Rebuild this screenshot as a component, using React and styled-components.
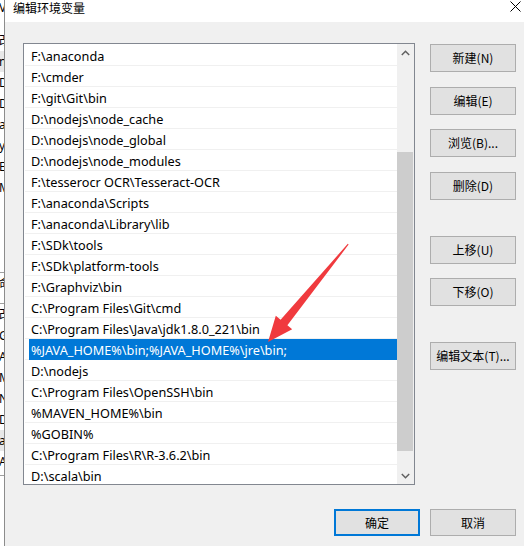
import styled, { createGlobalStyle } from 'styled-components';

const GlobalStyle = createGlobalStyle`
  html, body {
    margin: 0;
    padding: 0;
  }
  body {
    background: #f0f0f0;
    font-family: "Noto Sans", "Noto Sans CJK SC", sans-serif;
    overflow: hidden;
  }
`;

const paths = [
  'F:\\anaconda',
  'F:\\cmder',
  'F:\\git\\Git\\bin',
  'D:\\nodejs\\node_cache',
  'D:\\nodejs\\node_global',
  'D:\\nodejs\\node_modules',
  'F:\\tesserocr OCR\\Tesseract-OCR',
  'F:\\anaconda\\Scripts',
  'F:\\anaconda\\Library\\lib',
  'F:\\SDk\\tools',
  'F:\\SDk\\platform-tools',
  'F:\\Graphviz\\bin',
  'C:\\Program Files\\Git\\cmd',
  'C:\\Program Files\\Java\\jdk1.8.0_221\\bin',
  '%JAVA_HOME%\\bin;%JAVA_HOME%\\jre\\bin;',
  'D:\\nodejs',
  'C:\\Program Files\\OpenSSH\\bin',
  '%MAVEN_HOME%\\bin',
  '%GOBIN%',
  'C:\\Program Files\\R\\R-3.6.2\\bin',
  'D:\\scala\\bin',
];
const SELECTED = 14;

// the window peeking out behind the dialog
const backLines = [
  { text: 'V', h: 16 },
  { text: '', h: 14 },
  { text: '改', h: 21 },
  { text: 'n', h: 21, shade: true },
  { text: 'D', h: 21 },
  { text: 'D', h: 21 },
  { text: 'a', h: 21 },
  { text: 'y', h: 21 },
  { text: 'E', h: 21 },
  { text: 'M', h: 21 },
  { text: '', h: 75, line: true },
  { text: '命', h: 21 },
  { text: '', h: 10, line: true },
  { text: '改', h: 21 },
  { text: 'G', h: 21 },
  { text: 'A', h: 21 },
  { text: 'M', h: 21 },
  { text: 'N', h: 21 },
  { text: 'D', h: 21 },
  { text: 'a', h: 21, shade: true },
  { text: 'A', h: 21 },
  { text: '', h: 4, line: true },
];

const sideButtons = [
  { label: '新建(N)', top: 0 },
  { label: '编辑(E)', top: 15 },
  { label: '浏览(B)...', top: 14 },
  { label: '删除(D)', top: 15 },
  { label: '上移(U)', top: 36 },
  { label: '下移(O)', top: 14 },
  { label: '编辑文本(T)...', top: 36 },
];

const App = () => {
  return (
    <>
      <GlobalStyle />
      <Screen>
        <BackWindow>
          {backLines.map((l, i) => (
            <BackLine key={i} h={l.h} line={l.line} shade={l.shade}>
              {l.text}
            </BackLine>
          ))}
        </BackWindow>
        <Dialog>
          <TitleBar>
            <Title>编辑环境变量</Title>
            <Close width="11" height="11" viewBox="0 0 11 11">
              <path d="M0.5 0.5 L10.5 10.5 M10.5 0.5 L0.5 10.5" stroke="#000" strokeWidth="1" />
            </Close>
          </TitleBar>
          <Body>
            <MainRow>
              <ListBox>
                <Rows>
                  {paths.map((p, i) => (
                    <Row key={p}>
                      <Cell selected={i === SELECTED}>{p}</Cell>
                    </Row>
                  ))}
                </Rows>
                <ScrollBar>
                  <ArrowBox>
                    <svg width="9" height="6" viewBox="0 0 9 6">
                      <path d="M0.8 5 L4.5 1.3 L8.2 5" fill="none" stroke="#606060" strokeWidth="1.5" />
                    </svg>
                  </ArrowBox>
                  <Track>
                    <Thumb offset={91} size={299} />
                  </Track>
                  <ArrowBox>
                    <svg width="9" height="6" viewBox="0 0 9 6">
                      <path d="M0.8 1 L4.5 4.7 L8.2 1" fill="none" stroke="#606060" strokeWidth="1.5" />
                    </svg>
                  </ArrowBox>
                </ScrollBar>
              </ListBox>
              <ButtonColumn>
                {sideButtons.map(b => (
                  <Button key={b.label} top={b.top}>
                    {b.label}
                  </Button>
                ))}
              </ButtonColumn>
            </MainRow>
            <Footer>
              <FooterButton primary>确定</FooterButton>
              <FooterButton>取消</FooterButton>
            </Footer>
          </Body>
        </Dialog>
        <Pointer width="524" height="546" viewBox="0 0 524 546">
          <polygon
            points="348.6,244.6 287.4,325.3 292.2,329.2 268,342 275.8,315.8 280.6,319.8 347.8,243.8"
            fill="#f03a3e"
          />
        </Pointer>
      </Screen>
    </>
  );
};

export default App;

const Screen = styled.div`
  display: flex;
  height: 546px;
  overflow: hidden;
  position: relative;
  width: 524px;
`;

const BackWindow = styled.div`
  background: #fff;
  border-right: 1px solid #8c8c8c;
  display: flex;
  flex-direction: column;
  flex-shrink: 0;
  overflow: hidden;
  width: 4px;
`;

const BackLine = styled.div`
  background: ${({ shade }) => (shade ? '#e8e8e8' : 'transparent')};
  border-bottom: ${({ line }) => (line ? '1px solid #a0a0a0' : 'none')};
  box-sizing: border-box;
  color: #000;
  flex-shrink: 0;
  font-family: "Noto Sans", "Noto Sans CJK SC", sans-serif;
  font-size: 12px;
  height: ${({ h }) => h}px;
  line-height: ${({ h }) => h}px;
  margin-left: -1px;
  white-space: nowrap;
`;

const Dialog = styled.div`
  background: #f0f0f0;
  display: flex;
  flex: 1;
  flex-direction: column;
`;

const TitleBar = styled.div`
  align-items: flex-start;
  background: #fff;
  display: flex;
  height: 22px;
  justify-content: space-between;
  padding: 0 3px 0 8px;
`;

const Title = styled.div`
  color: #000;
  font-family: "Noto Sans CJK SC", sans-serif;
  font-size: 12px;
  line-height: 16px;
`;

const Close = styled.svg`
  margin-top: 1px;
`;

const Body = styled.div`
  display: flex;
  flex-direction: column;
  padding: 21px 8px 0 18px;
`;

const MainRow = styled.div`
  display: flex;
  gap: 15px;
`;

const ListBox = styled.div`
  background: #fff;
  border: 1px solid #828790;
  box-sizing: border-box;
  display: flex;
  height: 442px;
  overflow: hidden;
  width: 392px;
`;

const Rows = styled.div`
  flex: 1;
  overflow: hidden;
  padding-top: 1px;
`;

const Row = styled.div`
  border-bottom: 1px solid #f0f0f0;
  height: 20px;
  margin-left: 1px;
`;

const Cell = styled.div`
  background: ${({ selected }) => (selected ? '#0078d7' : 'transparent')};
  box-sizing: border-box;
  color: ${({ selected }) => (selected ? '#fff' : '#000')};
  font-family: "Noto Sans", sans-serif;
  font-size: 12.7px;
  height: ${({ selected }) => (selected ? '21px' : '20px')};
  line-height: 20px;
  margin-left: 4px;
  padding: 1px 0 0 2px;
  white-space: nowrap;
`;

const ScrollBar = styled.div`
  background: #f0f0f0;
  display: flex;
  flex-direction: column;
  width: 17px;
`;

const ArrowBox = styled.div`
  align-items: center;
  display: flex;
  height: 17px;
  justify-content: center;
`;

const Track = styled.div`
  flex: 1;
`;

const Thumb = styled.div`
  background: #cdcdcd;
  height: ${({ size }) => size}px;
  margin: ${({ offset }) => offset}px 1px 0 0;
`;

const ButtonColumn = styled.div`
  display: flex;
  flex-direction: column;
  padding-top: 1px;
  width: 86px;
`;

const Button = styled.div`
  align-items: center;
  background: #e1e1e1;
  border: 1px solid #adadad;
  box-sizing: border-box;
  color: #000;
  display: flex;
  font-family: "Noto Sans CJK SC", sans-serif;
  font-size: 12px;
  height: 28px;
  justify-content: center;
  margin-top: ${({ top }) => top}px;
  padding-bottom: 1px;
`;

const Footer = styled.div`
  display: flex;
  gap: 10px;
  justify-content: flex-end;
  margin-top: 24px;
`;

const FooterButton = styled.div`
  align-items: center;
  background: #e1e1e1;
  border: ${({ primary }) => (primary ? '2px solid #0078d7' : '1px solid #adadad')};
  box-sizing: border-box;
  color: #000;
  display: flex;
  font-family: "Noto Sans CJK SC", sans-serif;
  font-size: 12px;
  height: 27px;
  justify-content: center;
  width: 86px;
`;

const Pointer = styled.svg`
  left: 0;
  pointer-events: none;
  position: absolute;
  top: 0;
`;
